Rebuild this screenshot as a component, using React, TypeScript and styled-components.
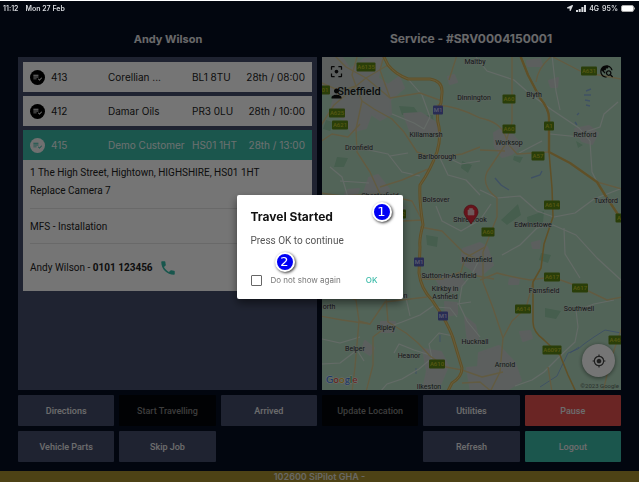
import React from "react";
import styled, { createGlobalStyle } from "styled-components";
import {
  MdPlaylistAddCheck,
  MdFilterCenterFocus,
  MdPerson,
  MdTravelExplore,
  MdPhone,
  MdMyLocation,
} from "react-icons/md";
import { FaLocationArrow } from "react-icons/fa";

const GlobalStyle = createGlobalStyle`
  * { box-sizing: border-box; }
  html, body, #root { height: 100%; }
  body {
    margin: 0;
    background: #060e22;
    font-family: Inter, "Liberation Sans", sans-serif;
    font-size: 10px;
    color: #222;
  }
  button, input { font-family: inherit; }
`;

const Screen = styled.div`
  min-height: 100%;
  display: flex;
  flex-direction: column;
  border-top: 1px solid #fff;
`;

const StatusBar = styled.header`
  position: relative;
  z-index: 3;
  display: flex;
  justify-content: space-between;
  align-items: center;
  height: 14px;
  padding: 0 3px;
  color: #d8dade;
  font-size: 7px;
  font-weight: 600;
`;

const StatusGroup = styled.div<{ $gap: number }>`
  display: flex;
  align-items: center;
  gap: ${(p) => p.$gap}px;
`;

const Titles = styled.div`
  display: grid;
  grid-template-columns: 1fr 1fr;
  gap: 5px;
  padding: 6px 19px 0;
  height: 42px;
  align-items: center;
`;

const Title = styled.h1<{ $size: number }>`
  margin: 0;
  text-align: center;
  font-size: ${(p) => p.$size}px;
  line-height: 16px;
  font-weight: 700;
  color: #e4e4e6;
`;

const Main = styled.main`
  flex: 1;
  display: grid;
  grid-template-columns: 1fr 1fr;
  gap: 5px;
  padding: 0 18px;
`;

const JobPanel = styled.section`
  display: flex;
  flex-direction: column;
  gap: 4px;
  padding: 5px;
  background: #454e6c;
`;

const JobCard = styled.article`
  background: #fff;
`;

const JobRow = styled.div<{ $selected?: boolean }>`
  display: grid;
  grid-template-columns: 21px 57px 84px 1fr;
  align-items: center;
  height: 30px;
  padding: 0 7px;
  background: ${(p) => (p.$selected ? "#3cbba9" : "#fff")};
  color: ${(p) => (p.$selected ? "#e9f5f3" : "#222")};
`;

const JobIcon = styled.span<{ $selected?: boolean }>`
  display: flex;
  align-items: center;
  justify-content: center;
  width: 15px;
  height: 15px;
  border-radius: 50%;
  background: ${(p) => (p.$selected ? "#f4f4f4" : "#000")};
  color: ${(p) => (p.$selected ? "#3cbba9" : "#fff")};
`;

const PlaceTime = styled.div`
  display: flex;
  justify-content: space-between;
`;

const JobDetails = styled.div`
  padding: 4px 7px 0;
  font-family: Roboto, "Liberation Sans", sans-serif;
`;

const Line = styled.p`
  margin: 0;
  line-height: 18px;
`;

const Section = styled.div<{ $height: number }>`
  display: flex;
  align-items: center;
  gap: 6px;
  height: ${(p) => p.$height}px;
  border-top: 1px solid #e4e4e4;
`;

const Address = styled.div`
  height: 44px;
`;

const Phone = styled.a`
  display: flex;
  color: #35bca8;
`;

const MapPanel = styled.section`
  position: relative;
  overflow: hidden;
  background: #b2d6bf;
`;

const MapDrawing = styled.svg`
  position: absolute;
  inset: 0;
  width: 100%;
  height: 100%;
  font-family: Roboto, "Liberation Sans", sans-serif;
`;

const MapTool = styled.button<{ $side: "left" | "right"; $top: number }>`
  position: absolute;
  top: ${(p) => p.$top}px;
  ${(p) => p.$side}: 7px;
  display: flex;
  padding: 0;
  border: 0;
  background: none;
  color: #101010;
`;

const LocateButton = styled.button`
  position: absolute;
  right: 6px;
  bottom: 13px;
  width: 33px;
  height: 33px;
  display: flex;
  align-items: center;
  justify-content: center;
  padding: 0;
  border: 0;
  border-radius: 50%;
  background: #fff;
  color: #444;
  box-shadow: 0 1px 4px rgba(0, 0, 0, 0.5);
`;

const Actions = styled.nav`
  display: grid;
  grid-template-columns: repeat(6, 1fr);
  gap: 5px;
  padding: 5px 18px 9px;
`;

const tones = { normal: "#454e6c", off: "#040609", red: "#e65250", teal: "#3cbba9" };

const ActionButton = styled.button<{ $tone: keyof typeof tones; $column?: number }>`
  height: 31px;
  padding: 0;
  border: 0;
  border-radius: 1px;
  font-family: Roboto, "Liberation Sans", sans-serif;
  font-size: 9px;
  font-weight: 500;
  background: ${(p) => tones[p.$tone]};
  color: ${(p) => (p.$tone === "off" ? "#858585" : "#ececee")};
  grid-column: ${(p) => p.$column ?? "auto"};
`;

const Footer = styled.footer`
  height: 11px;
  background: #a8902f;
  color: #e4e2da;
  text-align: center;
  font-size: 9px;
  line-height: 11px;
  font-weight: 600;
`;

const Backdrop = styled.div`
  position: fixed;
  inset: 1px 0 0;
  z-index: 2;
  display: flex;
  align-items: center;
  justify-content: center;
  padding-top: 11px;
  background: rgba(0, 0, 0, 0.54);
`;

const Dialog = styled.div`
  position: relative;
  width: 166px;
  padding: 14px 14px 10px;
  border-radius: 2px;
  background: #fff;
  box-shadow: 0 4px 10px rgba(0, 0, 0, 0.5);
`;

const DialogTitle = styled.h2`
  margin: 0;
  font-size: 12px;
  line-height: 16px;
  font-weight: 700;
  color: #111;
`;

const DialogText = styled.p`
  margin: 8px 0 22px;
  font-family: Roboto, "Liberation Sans", sans-serif;
  font-size: 10px;
  line-height: 16px;
  color: #555;
`;

const DialogActions = styled.div`
  display: flex;
  align-items: center;
  justify-content: space-between;
  padding-right: 11px;
  height: 18px;
`;

const CheckLabel = styled.label`
  display: flex;
  align-items: center;
  gap: 9px;
  font-size: 8px;
  color: #777;
`;

const CheckBox = styled.input`
  appearance: none;
  width: 11px;
  height: 11px;
  margin: 0;
  border: 1px solid #666;
  border-radius: 1px;
`;

const OkButton = styled.button`
  padding: 0;
  border: 0;
  background: none;
  font-size: 8px;
  font-weight: 500;
  color: #3cbba9;
`;

const Marker = styled.span<{ $left: number; $top: number }>`
  position: absolute;
  left: ${(p) => p.$left}px;
  top: ${(p) => p.$top}px;
  width: 20px;
  height: 20px;
  border: 2px solid #fff;
  border-radius: 50%;
  background: #0000f5;
  color: #fff;
  font: 13px/16px "DejaVu Sans", sans-serif;
  text-align: center;
  box-shadow: 1px 1px 3px rgba(0, 0, 0, 0.8);
`;

const jobs = [
  { id: "413", name: "Corellian ...", code: "BL1 8TU", time: "28th / 08:00" },
  { id: "412", name: "Damar Oils", code: "PR3 0LU", time: "28th / 10:00" },
  { id: "415", name: "Demo Customer", code: "HS01 1HT", time: "28th / 13:00", selected: true },
];

type Place = [string, number, number];

const places: Place[] = [
  ["Maltby", 153, 4], ["Dinnington", 152, 40], ["Blyth", 212, 37], ["Killamarsh", 104, 77],
  ["Dronfield", 37, 90], ["Barlborough", 115, 99], ["Worksop", 187, 85], ["Retford", 263, 77],
  ["Bolsover", 114, 142], ["Chesterfield", 58, 138], ["Shirebrook", 148, 162], ["Tuxford", 284, 143],
  ["Edwinstowe", 211, 167], ["Mansfield", 155, 202], ["Sutton-in-Ashfield", 127, 218],
  ["Kirkby in", 123, 231], ["Ashfield", 123, 239], ["Alfreton", 73, 238], ["orth", 7, 249],
  ["Ripley", 64, 270], ["Belper", 33, 291], ["Heanor", 87, 298], ["Hucknall", 153, 284],
  ["Ilkeston", 107, 329], ["Farnsfield", 222, 233], ["Southwell", 257, 251], ["Arnold", 183, 307],
];

const shields: Place[] = [
  ["A6135", 44, 10], ["01", 3, 33], ["A625", 15, 56], ["A621", 18, 68], ["A610", 115, 307],
  ["A60", 187, 42], ["A60", 187, 72], ["A1", 227, 69], ["A57", 216, 99], ["A614", 230, 148],
  ["A", 297, 161], ["A631", 267, 14], ["A60", 166, 175], ["A617", 230, 220], ["A617", 258, 231],
  ["A614", 201, 252], ["A6097", 230, 293], ["A46", 293, 283], ["A632", 76, 157],
  ["M1", 116, 53], ["M1", 97, 205], ["M1", 121, 259],
];

const M1 = "M61 -2L66 8Q73 17 86 22L108 22Q121 24 120 36L119 46Q113 56 117 70Q119 82 115 95Q108 114 98 128Q97 143 101 168Q97 182 98 190L97 216Q99 232 110 243L120 258Q128 272 131 281L140 311Q140 320 130 326L125 336";
const A1 = "M198 -2L206 18L218 41Q227 52 227 61V95L230 131L231 160L222 187L219 211L211 225V265Q211 275 222 283L238 298L246 318L254 335";
const EAST = "M198 -2L206 18L218 41Q227 52 227 61V95L248 106L275 125L283 138L299 162";
const A_ROADS = [
  "M115 48Q135 49 158 61Q178 65 183 78L187 88L195 97L227 95",
  "M190 -2V65L183 88L165 115Q159 129 175 141V160L161 195V225L171 251L181 281L178 315L168 335",
  "M183 94L158 93M135 -2L127 23M231 -2Q216 10 214 25M231 0L260 15L299 22",
  "M158 223L175 216Q190 220 208 223L230 220L258 230L285 243L300 240",
  "M211 225L204 251L190 264L181 281M275 125L300 132",
  "M-2 70L12 48L34 29L44 21L66 8M44 21L24 10L12 -2M34 29L40 44L34 72L35 95L48 115L58 137L57 160",
  "M44 21L68 41L98 36L120 44M40 44L52 52L70 62L82 75L95 95L112 101L140 97L158 90",
  "M35 0L30 18L34 29M61 2L58 13L68 41M-2 25L18 34L34 29M-2 85L10 77L26 80L38 67",
  "M58 130L80 123L106 112M-2 136L20 139L58 137L90 144L101 165M58 150L80 164L101 163",
  "M98 170L120 174L142 196L161 205M97 222L120 222L139 215L143 201L163 190",
  "M64 170L64 240L66 265L84 276L96 286L108 299L124 310L140 313",
  "M105 240L63 245L48 267L37 264L34 243L20 236M37 264L33 310L30 335M64 270L51 280L51 308L44 335",
  "M140 313L160 320L181 315M140 326L158 325L170 335M281 335L288 305L300 270",
  "M-2 259L20 263L48 267M150 218L172 222M230 335L226 310",
];
const MINOR = [
  "M154 0L165 14L192 23L208 37L230 53L257 71L268 84L270 115L275 125",
  "M230 -2L234 34L238 53M296 45L282 57L278 70L263 75M228 77L258 80",
  "M197 96L220 84M158 133L175 141L198 139L215 154L232 160L253 156L272 142L298 132",
  "M70 57L92 66L102 72L108 60L100 38L86 22M117 99L126 118L144 123L158 138",
  "M42 92L66 97L80 115L98 119M18 124L47 126M68 99L86 96M8 110L20 120L27 144",
  "M114 149L120 164L139 174L158 163L169 147M120 98L139 107L158 104",
  "M180 198L198 188L215 171L231 168L254 178L275 201L299 223M242 171L243 197L258 221",
  "M254 253L256 270L253 285L238 299L222 315L210 323L193 329M256 253L272 247L292 243",
  "M131 279L117 276L107 287L110 301L97 312L80 322L65 327L58 335M108 298L92 293L77 287L72 296",
  "M66 270L80 265L98 258L111 249M84 241L88 259M0 307L18 306L35 293L42 304M38 280L18 286L0 282",
  "M158 201L150 217L140 229L137 247L145 264L158 280M135 247L149 245M113 250L128 251L135 260",
];

const TOWNS = [
  "M0 0L18 -2L28 12L42 2L60 0L56 21L66 28L77 20L82 31L68 43L69 57L58 63L49 57L44 71L29 75L24 64L8 55L13 38L0 36Z",
  "M82 57L99 56L113 65L118 74L102 78L88 74Z", "M172 76L182 70L191 78L199 88L190 97L180 100L173 90Z",
  "M47 121L56 118L67 132L65 145L82 151L73 164L48 160L39 144Z", "M253 72L267 69L276 76L270 87L260 84Z",
  "M141 192L158 186L165 190L171 208L158 219L147 211L139 205Z", "M113 220L136 217L143 226L132 235L120 232Z",
  "M157 296L177 289L193 306L199 324L182 335L149 335L145 311L156 310Z", "M143 260L153 268L157 285L146 286Z",
  "M101 292L119 295L126 309L116 333L101 333L105 314Z", "M59 265L73 265L72 275L59 275Z",
  "M126 20L132 18L135 25L128 27Z", "M205 4L218 2L220 9L206 9Z", "M198 275L208 274L210 281L201 284Z",
  "M210 186L218 184L217 191L211 191Z", "M227 24L236 21L235 30L229 30Z", "M188 222L197 221L196 227L187 227Z",
  "M43 284L52 291L48 298L40 293Z", "M123 245L135 246L135 257L124 259Z", "M26 133L37 132L35 137L23 137Z",
];

const WOODS = [
  "M98 59L111 58L112 70L106 76L98 69Z", "M77 49L92 50L97 57L80 58Z", "M4 63L14 66L8 74L1 72Z",
  "M104 178L116 180L115 190L105 188Z", "M192 99L201 100L198 106L191 103Z", "M140 104L150 108L146 116L139 111Z",
  "M205 160L222 154L221 166L206 170Z", "M179 163L196 147L199 158L185 168Z", "M254 84L261 88L256 91Z",
  "M219 196L229 198L226 206L217 203Z", "M15 100L26 101L22 110L12 110Z", "M223 251L239 254L234 262L223 260Z",
];

function RegionMap() {
  return (
    <MapDrawing viewBox="0 0 299 333" preserveAspectRatio="xMidYMid slice" role="img" aria-label="Map of the Sheffield area">
      <rect x="-100" y="-100" width="500" height="600" fill="#b4dbc1" />
      <g fill="#98cdaa">{WOODS.map((d) => <path key={d} d={d} />)}</g>
      <g fill="#c8cfcd" strokeLinejoin="round" stroke="#c8cfcd" strokeWidth="2">
        {TOWNS.map((d) => <path key={d} d={d} />)}
      </g>
      <g fill="none" stroke="#7fa6df" strokeWidth="1.4" opacity=".8">
        <path d="M264 34l5-2M262 38h7M263 43l5 1M264 48l4 1M255 58l2-2M253 65l2 3M173 121l6 7 8 5M209 121l9-3 2-4" />
        <path d="M299 276L283 273 272 280 262 287 256 292 246 296 235 319 218 330M248 296l9-6M118 278v7M94 311v6" strokeWidth="1" />
      </g>
      <g fill="none" stroke="#dbe8e0" strokeWidth="1.1" strokeLinejoin="round">
        {MINOR.map((d) => <path key={d} d={d} />)}
      </g>
      <g fill="none" stroke="#d6c68e" strokeWidth="1.4" strokeLinejoin="round">
        {A_ROADS.map((d) => <path key={d} d={d} />)}
      </g>
      <g fill="none" stroke="#d0af58" strokeLinejoin="round">
        <path d={M1} strokeWidth="3" />
        <path d={A1} strokeWidth="1.6" />
        <path d={EAST} strokeWidth="2.4" />
      </g>
      <path d={M1} fill="none" stroke="#e3cb80" strokeWidth="1" />
      {shields.map(([name, x, y], i) => {
        const blue = name === "M1";
        const w = blue ? 10 : name.length * 3 + 4;
        return (
          <g key={i}>
            <rect x={x - w / 2} y={y - 4.5} width={w} height="9" rx="1" fill={blue ? "#5961b8" : "#5d8714"} />
            <text x={x} y={y + 2} textAnchor="middle" fontSize="6" fontWeight="500" fill={blue ? "#c5c9f0" : "#bcc22a"}>{name}</text>
          </g>
        );
      })}
      <g fontSize="7" textAnchor="middle" fill="#2d3333" stroke="#c9d8cf" strokeWidth="1" paintOrder="stroke">
        {places.map(([name, x, y]) => <text key={name} x={x} y={y + 3}>{name}</text>)}
        <text x="37" y="38" fontSize="11" fontWeight="500" fill="#161a1a">Sheffield</text>
      </g>
      <path d="M149 167C146 162 142 159 142 155a7 7 0 0 1 14 0c0 4-4 7-7 12Z" fill="#e02d3c" stroke="#a51e2c" strokeWidth=".7" />
      <path d="M146 153h6v5h-6zM147.500 153v-1.500h3v1.500" fill="#f2c5c8" stroke="#f2c5c8" strokeWidth=".6" />
      <text x="4" y="326" fontSize="10" fontWeight="500" fontFamily="Lato, sans-serif" stroke="#e9efeb" strokeWidth="1" paintOrder="stroke">
        <tspan fill="#3f7be0">G</tspan><tspan fill="#df4a3d">o</tspan><tspan fill="#e8b424">o</tspan><tspan fill="#3f7be0">g</tspan><tspan fill="#3fa458">l</tspan><tspan fill="#df4a3d">e</tspan>
      </text>
      <text x="297" y="331" textAnchor="end" fontSize="6" fill="#5c6b62">©2023 Google</text>
    </MapDrawing>
  );
}

export default function App() {
  return (
    <>
      <GlobalStyle />
      <Screen>
        <StatusBar>
          <StatusGroup $gap={7}><span>11:12</span><span>Mon 27 Feb</span></StatusGroup>
          <StatusGroup $gap={3}>
            <FaLocationArrow size={6} />
            <svg width="10" height="7" viewBox="0 0 10 7" fill="currentColor" aria-hidden="true">
              <path d="M0 5h2v2H0zM2.700 4h2v3h-2zM5.400 2h2v5h-2zM8 0h2v7H8z" />
            </svg>
            <span>4G</span><span>95%</span>
            <svg width="15" height="7" viewBox="0 0 15 7" aria-hidden="true">
              <rect x=".5" y=".5" width="12" height="6" rx="1.500" fill="#fff" stroke="#aaa" />
              <path d="M13.500 2.500v2" stroke="#aaa" />
            </svg>
          </StatusGroup>
        </StatusBar>
        <Titles>
          <Title $size={11}>Andy Wilson</Title>
          <Title $size={12}>Service - #SRV0004150001</Title>
        </Titles>
        <Main>
          <JobPanel>
            {jobs.map((job) => (
              <JobCard key={job.id}>
                <JobRow $selected={job.selected}>
                  <JobIcon $selected={job.selected}><MdPlaylistAddCheck size={11} /></JobIcon>
                  <span>{job.id}</span>
                  <span>{job.name}</span>
                  <PlaceTime><span>{job.code}</span><span>{job.time}</span></PlaceTime>
                </JobRow>
                {job.selected && (
                  <JobDetails>
                    <Address>
                      <Line>1 The High Street, Hightown, HIGHSHIRE, HS01 1HT</Line>
                      <Line>Replace Camera 7</Line>
                    </Address>
                    <Section $height={35}>MFS - Installation</Section>
                    <Section $height={48}>
                      <span>Andy Wilson - <b>0101 123456</b></span>
                      <Phone href="tel:0101123456" aria-label="Call Andy Wilson"><MdPhone size={18} /></Phone>
                    </Section>
                  </JobDetails>
                )}
              </JobCard>
            ))}
          </JobPanel>
          <MapPanel>
            <RegionMap />
            <MapTool $side="left" $top={7} aria-label="Centre map"><MdFilterCenterFocus size={15} /></MapTool>
            <MapTool $side="left" $top={29} aria-label="My position"><MdPerson size={15} /></MapTool>
            <MapTool $side="right" $top={7} aria-label="Explore area"><MdTravelExplore size={15} /></MapTool>
            <LocateButton aria-label="Locate me"><MdMyLocation size={14} /></LocateButton>
          </MapPanel>
        </Main>
        <Actions>
          <ActionButton $tone="normal">Directions</ActionButton>
          <ActionButton $tone="off">Start Travelling</ActionButton>
          <ActionButton $tone="normal">Arrived</ActionButton>
          <ActionButton $tone="off">Update Location</ActionButton>
          <ActionButton $tone="normal">Utilities</ActionButton>
          <ActionButton $tone="red">Pause</ActionButton>
          <ActionButton $tone="normal">Vehicle Parts</ActionButton>
          <ActionButton $tone="normal">Skip Job</ActionButton>
          <ActionButton $tone="normal" $column={5}>Refresh</ActionButton>
          <ActionButton $tone="teal" $column={6}>Logout</ActionButton>
        </Actions>
        <Footer>102600 SiPilot GHA -</Footer>
      </Screen>
      <Backdrop>
        <Dialog role="dialog" aria-modal="true" aria-labelledby="dialog-title">
          <DialogTitle id="dialog-title">Travel Started</DialogTitle>
          <DialogText>Press OK to continue</DialogText>
          <DialogActions>
            <CheckLabel><CheckBox type="checkbox" />Do not show again</CheckLabel>
            <OkButton>OK</OkButton>
          </DialogActions>
          <Marker $left={135} $top={7}>1</Marker>
          <Marker $left={38} $top={57}>2</Marker>
        </Dialog>
      </Backdrop>
    </>
  );
}
